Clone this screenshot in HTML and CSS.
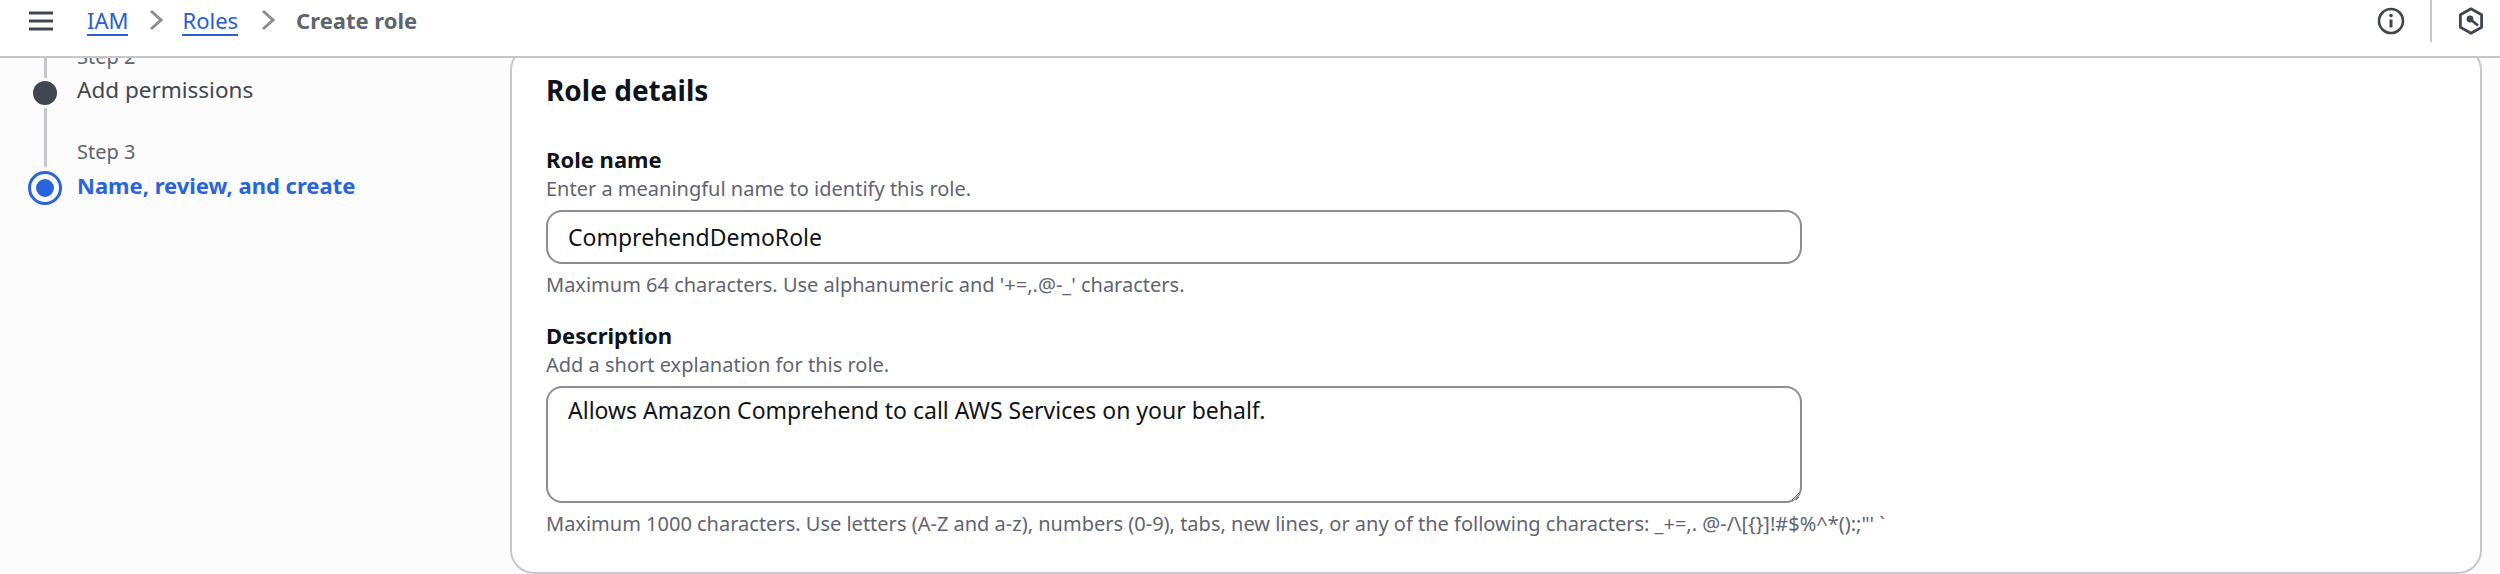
FILE: index.html
```html
<!DOCTYPE html>
<html lang="en">
<head>
<meta charset="utf-8">
<title>Create role</title>
<link rel="stylesheet" href="styles.css">
</head>
<body>
<header class="topbar">
  <svg class="menu" width="24" height="20" viewBox="0 0 24 20"><path d="M0 2h24M0 10h24M0 18h24" stroke="#424650" stroke-width="3" fill="none"/></svg>
  <nav class="crumbs">
    <a class="crumb" href="#">IAM</a>
    <svg class="chev chev-first" width="14" height="22" viewBox="0 0 14 22"><path d="M2 2l10 9-10 9" stroke="#8c8c94" stroke-width="3" fill="none"/></svg>
    <a class="crumb" href="#">Roles</a>
    <svg class="chev" width="14" height="22" viewBox="0 0 14 22"><path d="M2 2l10 9-10 9" stroke="#8c8c94" stroke-width="3" fill="none"/></svg>
    <span class="current">Create role</span>
  </nav>
  <div class="tools">
    <svg class="info" width="28" height="28" viewBox="0 0 28 28"><circle cx="14" cy="14" r="12" stroke="#424650" stroke-width="2.6" fill="none"/><path d="M14 12.5v8" stroke="#424650" stroke-width="3" fill="none"/><circle cx="14" cy="8.6" r="1.8" fill="#424650"/></svg>
    <span class="divider"></span>
    <svg class="hex" width="26" height="28" viewBox="0 0 26 28"><path d="M13 1.800l10.600 6v12.400l-10.600 6-10.600-6V7.800z" stroke="#424650" stroke-width="2.800" fill="none" stroke-linejoin="round"/><path d="M12 12l8 6.500" stroke="#424650" stroke-width="2.800" fill="none"/><circle cx="12" cy="12" r="3.400" fill="#424650"/></svg>
  </div>
</header>
<main class="layout">
  <aside class="steps">
    <div class="rail">
      <span class="line line-top"></span>
      <span class="dot"></span>
      <span class="line line-mid"></span>
      <span class="ring"><span class="ring-core"></span></span>
    </div>
    <ol class="step-list">
      <li class="step"><span class="step-num">Step 2</span><span class="step-name">Add permissions</span></li>
      <li class="step"><span class="step-num">Step 3</span><span class="step-name step-active">Name, review, and create</span></li>
    </ol>
  </aside>
  <section class="panel">
    <h2 class="panel-title">Role details</h2>
    <div class="field field-name">
      <label class="label" for="role-name">Role name</label>
      <p class="hint">Enter a meaningful name to identify this role.</p>
      <input class="control input" id="role-name" type="text" value="ComprehendDemoRole">
      <p class="constraint">Maximum 64 characters. Use alphanumeric and '+=,.@-_' characters.</p>
    </div>
    <div class="field field-desc">
      <label class="label" for="role-desc">Description</label>
      <p class="hint">Add a short explanation for this role.</p>
      <textarea class="control textarea" id="role-desc">Allows Amazon Comprehend to call AWS Services on your behalf.</textarea>
      <p class="constraint">Maximum 1000 characters. Use letters (A-Z and a-z), numbers (0-9), tabs, new lines, or any of the following characters: _+=,. @-/\[{}]!#$%^*():;"' `</p>
    </div>
  </section>
</main>
</body>
</html>
```
FILE: styles.css
```css
* { box-sizing: border-box; }
html, body { margin: 0; height: 574px; overflow: hidden; }
body {
  font-family: "Noto Sans", "Open Sans", sans-serif;
  color: #0f141a;
  background: #fcfcfd;
  display: flex;
  flex-direction: column;
}
.topbar {
  position: relative;
  z-index: 2;
  height: 58px;
  flex: none;
  background: #fff;
  border-bottom: 2px solid #c6c6cd;
  display: flex;
  align-items: flex-start;
  padding-left: 29px;
}
.menu { margin-top: 11px; flex: none; }
.crumbs {
  display: flex;
  align-items: center;
  margin-left: 34px;
  height: 39px;
  font-size: 22px;
}
.crumb { color: #295dd6; text-decoration: none; border-bottom: 2px solid #295dd6; line-height: 28px; margin-top: 2px; }
.chev { margin: 0 21px 0 23px; }
.chev-first { margin-right: 19px; margin-left: 21px; }
.current { color: #5f6570; font-weight: 700; }
.tools { margin-left: auto; display: flex; align-items: flex-start; padding-right: 16px; height: 42px; }
.info { margin-top: 7px; }
.divider { width: 2px; height: 42px; background: #c6c6cd; margin: 0 26px 0 25px; }
.hex { margin-top: 7px; }

.layout { flex: 1; display: flex; min-height: 0; }
.steps { width: 510px; flex: none; display: flex; padding-left: 28px; overflow: hidden; }
.rail { width: 34px; display: flex; flex-direction: column; align-items: center; }
.line { width: 3px; background: #c6c6cd; flex: none; }
.line-top { height: 20px; }
.line-mid { height: 59px; margin-top: 3px; }
.dot { width: 24px; height: 24px; border-radius: 50%; background: #424650; flex: none; margin-top: 3px; }
.ring { width: 34px; height: 34px; border: 3px solid #2a64dc; border-radius: 50%; flex: none; display: flex; align-items: center; justify-content: center; margin-top: 4px; }
.ring-core { width: 18px; height: 18px; border-radius: 50%; background: #2a64dc; }
.step-list { list-style: none; margin: -14px 0 0 15px; padding: 0; }
.step { display: flex; flex-direction: column; margin-bottom: 29px; }
.step-num { font-size: 20px; line-height: 26px; color: #5f6570; height: 26px; }
.step-name { font-size: 22.500px; line-height: 40px; color: #424650; }
.step-active { font-size: 22px; color: #2a64dc; font-weight: 700; }

.panel {
  flex: 1;
  margin: -12px 18px 0 0;
  background: #fff;
  border: 2px solid #c6c6cd;
  border-radius: 24px;
  padding: 23px 34px 0;
}
.panel-title { margin: 0; font-size: 28px; line-height: 38px; font-weight: 700; }
.field-name { margin-top: 35px; }
.field-desc { margin-top: 21px; }
.label { display: block; font-size: 22px; line-height: 31px; font-weight: 700; }
.hint, .constraint { margin: 0; font-size: 20px; line-height: 28px; color: #5f6570; }
.hint { margin-bottom: 7px; }
.control {
  display: block;
  width: 1256px;
  border: 2px solid #8c8c94;
  border-radius: 16px;
  font: inherit;
  font-size: 23px;
  color: #0f141a;
  background: #fff;
  padding: 0 20px;
  outline: 0;
  margin-bottom: 7px;
}
.input { height: 54px; }
.textarea { height: 117px; line-height: 28px; padding-top: 8px; resize: both; }
```
